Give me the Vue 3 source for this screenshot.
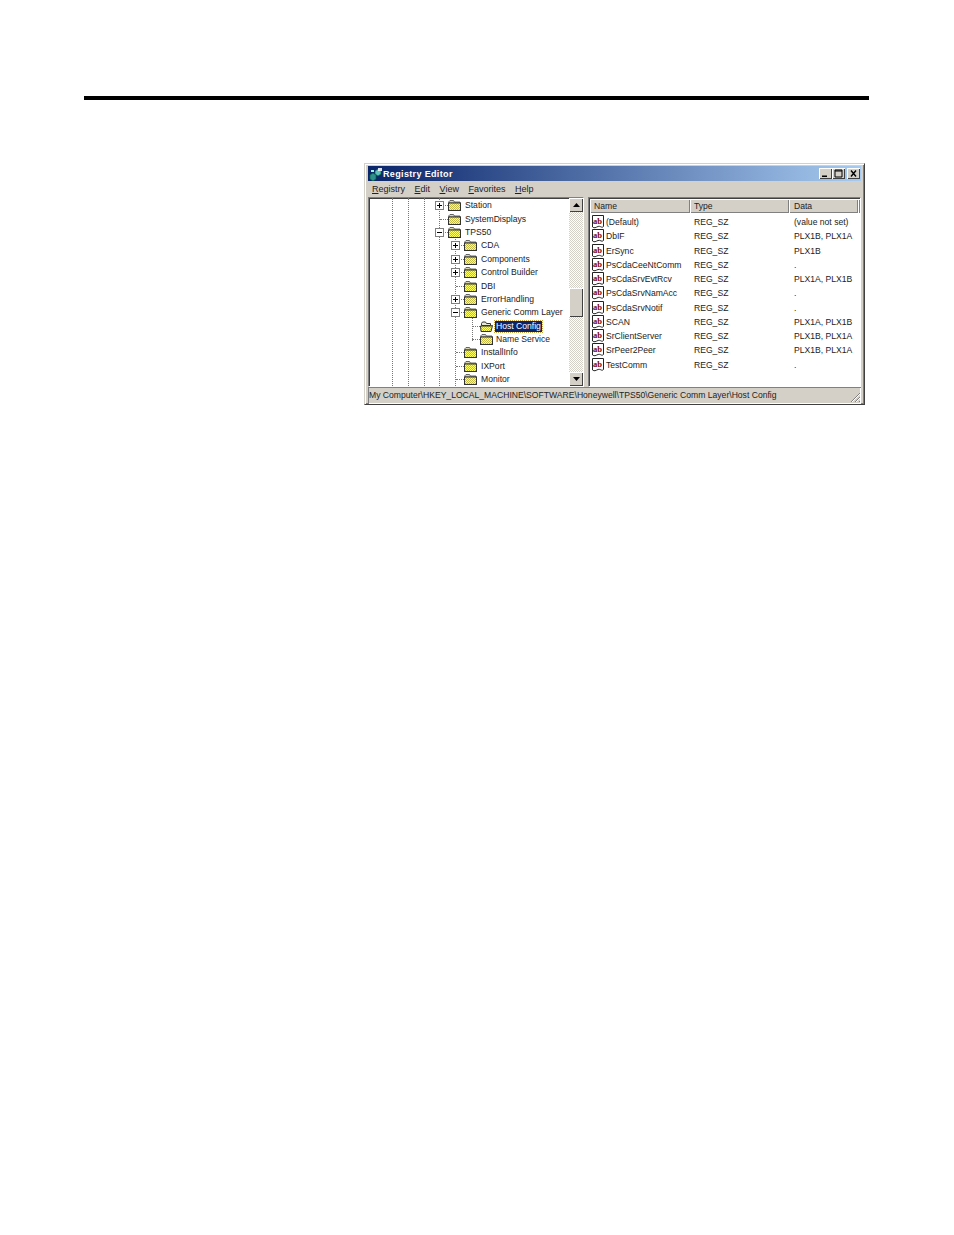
<script setup>
const menus = [
  { key: 'R', rest: 'egistry' },
  { key: 'E', rest: 'dit' },
  { key: 'V', rest: 'iew' },
  { key: 'F', rest: 'avorites' },
  { key: 'H', rest: 'elp' }
]
const tree = [
  { label: 'Station', depth: 0, exp: '+' },
  { label: 'SystemDisplays', depth: 0 },
  { label: 'TPS50', depth: 0, exp: '-' },
  { label: 'CDA', depth: 1, exp: '+' },
  { label: 'Components', depth: 1, exp: '+' },
  { label: 'Control Builder', depth: 1, exp: '+' },
  { label: 'DBI', depth: 1 },
  { label: 'ErrorHandling', depth: 1, exp: '+' },
  { label: 'Generic Comm Layer', depth: 1, exp: '-' },
  { label: 'Host Config', depth: 2, selected: true },
  { label: 'Name Service', depth: 2 },
  { label: 'InstallInfo', depth: 1 },
  { label: 'IXPort', depth: 1 },
  { label: 'Monitor', depth: 1 }
]
const values = [
  ['(Default)', '(value not set)'],
  ['DbIF', 'PLX1B, PLX1A'],
  ['ErSync', 'PLX1B'],
  ['PsCdaCeeNtComm', '.'],
  ['PsCdaSrvEvtRcv', 'PLX1A, PLX1B'],
  ['PsCdaSrvNamAcc', '.'],
  ['PsCdaSrvNotif', '.'],
  ['SCAN', 'PLX1A, PLX1B'],
  ['SrClientServer', 'PLX1B, PLX1A'],
  ['SrPeer2Peer', 'PLX1B, PLX1A'],
  ['TestComm', '.']
]
</script>

<template>
  <div class="page">
    <div class="rule"></div>
    <div class="window">
      <div class="titlebar">
        <svg class="appicon" width="14" height="14" viewBox="0 0 14 14">
          <path d="M1 8l3-2 3 2v4l-3 2-3-2z" fill="#2f8f8f" stroke="#063" stroke-width=".7" />
          <path d="M6 4l3-2 3 2v3l-3 2-3-2z" fill="#5fc0c0" stroke="#063" stroke-width=".7" />
          <path d="M9 1h4v3h-4z" fill="#fff" opacity=".85" />
          <path d="M2 3h3v2H2z" fill="#9fd" />
        </svg>
        <span class="title">Registry Editor</span>
        <div class="captions">
          <span class="cap"><svg width="13" height="11" viewBox="0 0 13 11"><path d="M3 7.500h5v1.500H3z" fill="#000" /></svg></span>
          <span class="cap"><svg width="13" height="11" viewBox="0 0 13 11"><path d="M3 2h7v7H3zM3 3h7" fill="none" stroke="#000" /></svg></span>
          <span class="cap close"><svg width="13" height="11" viewBox="0 0 13 11"><path d="M4 2.500l5 6M9 2.500l-5 6" stroke="#000" stroke-width="1.400" /></svg></span>
        </div>
      </div>

      <div class="menubar">
        <span v-for="m in menus" :key="m.key" class="menu"><u>{{ m.key }}</u>{{ m.rest }}</span>
      </div>

      <div class="panes">
        <div class="tree-pane">
          <div class="tree">
            <i class="guide g1"></i>
            <i class="guide g2"></i>
            <i class="guide g3"></i>
            <i class="guide g4"></i>
            <i class="guide g5"></i>
            <i class="guide g6"></i>
            <div
              v-for="n in tree"
              :key="n.label"
              class="node"
              :style="{ paddingLeft: 66 + n.depth * 16 + 'px' }"
            >
              <span class="stub">
                <span v-if="n.exp" class="exp">
                  <svg width="9" height="9" viewBox="0 0 9 9">
                    <rect x=".5" y=".5" width="8" height="8" fill="#fff" stroke="#808080" />
                    <path d="M2 4.500h5" stroke="#000" />
                    <path v-if="n.exp === '+'" d="M4.500 2v5" stroke="#000" />
                  </svg>
                </span>
              </span>
              <svg class="folder" width="13" height="11" viewBox="0 0 13 11">
                <defs>
                  <pattern id="dith" width="2" height="2" patternUnits="userSpaceOnUse">
                    <rect width="2" height="2" fill="#ffff60" />
                    <rect width="1" height="1" fill="#c4bc48" />
                    <rect x="1" y="1" width="1" height="1" fill="#c4bc48" />
                  </pattern>
                </defs>
                <template v-if="!n.selected">
                  <path d="M1 3V1.500l1-1h3.500l1 1.500H12v1z" fill="#d8d4b8" stroke="#444" stroke-width=".8" />
                  <rect x=".5" y="3" width="12" height="7.500" fill="url(#dith)" stroke="#333" />
                </template>
                <template v-else>
                  <path d="M1.500 2.500l1-1.500h3l1 1.500h4v2h-9z" fill="#e8e8d8" stroke="#333" />
                  <path d="M.5 5h9.500l2.500-.5-1.500 6h-10z" fill="url(#dith)" stroke="#333" />
                </template>
              </svg>
              <span class="node-label" :class="{ sel: n.selected, deep: n.depth === 2 }">{{ n.label }}</span>
            </div>
          </div>
          <div class="vscroll">
            <span class="sbtn"><svg width="7" height="4" viewBox="0 0 7 4"><path d="M3.500 0L7 4H0z" fill="#000" /></svg></span>
            <div class="track">
              <div class="thumb"></div>
            </div>
            <span class="sbtn"><svg width="7" height="4" viewBox="0 0 7 4"><path d="M0 0h7L3.500 4z" fill="#000" /></svg></span>
          </div>
        </div>

        <div class="list-pane">
          <div class="list-head">
            <span class="col c-name">Name</span>
            <span class="col c-type">Type</span>
            <span class="col c-data">Data</span>
            <span class="col c-rest"></span>
          </div>
          <div class="list-body">
            <div v-for="v in values" :key="v[0]" class="row">
              <span class="c-name cell">
                <svg class="ab" width="14" height="14" viewBox="0 0 14 14">
                  <path d="M1.500 .5h11v11c-2 2-3-1-5.500 0s-3.500 2-5.500 .5z" fill="#fff" stroke="#222" />
                  <text x="2" y="8.500" class="abtext">ab</text>
                </svg>
                <span>{{ v[0] }}</span>
              </span>
              <span class="c-type cell typecell">REG_SZ</span>
              <span class="c-data cell datacell">{{ v[1] }}</span>
            </div>
          </div>
        </div>
      </div>

      <div class="statusbar">
        <span class="path">My Computer\HKEY_LOCAL_MACHINE\SOFTWARE\Honeywell\TPS50\Generic Comm Layer\Host Config</span>
        <svg class="grip" width="12" height="12" viewBox="0 0 12 12">
          <path d="M11 2L2 11M11 6l-5 5M11 10l-1 1" stroke="#808080" fill="none" />
          <path d="M11 3l-8 8M11 7l-4 4" stroke="#fff" fill="none" />
        </svg>
      </div>
    </div>
  </div>
</template>

<style scoped>
.page {
  width: 954px;
  height: 1235px;
  background: #fff;
  padding-top: 96px;
  box-sizing: border-box;
  font-family: "Liberation Sans", Arial, sans-serif;
  font-size: 8.6px;
  color: #222;
  overflow: hidden;
}
.rule {
  width: 785px;
  height: 4px;
  margin-left: 84px;
  background: #000;
}
.window {
  width: 501px;
  height: 242px;
  margin: 63px 0 0 364px;
  box-sizing: border-box;
  padding: 2px 3px 1px;
  background: #d4d0c8;
  border: 1px solid;
  border-color: #d4d0c8 #404040 #404040 #d4d0c8;
  box-shadow: inset 1px 1px 0 #fff, inset -1px -1px 0 #808080;
  display: flex;
  flex-direction: column;
}
.titlebar {
  height: 15px;
  flex: none;
  display: flex;
  align-items: center;
  padding-left: 1px;
  background: linear-gradient(90deg, #0a246a, #a6caf0);
}
.title {
  color: #fff;
  font-weight: 700;
  font-size: 9px;
  letter-spacing: 0.35px;
}
.captions {
  margin-left: auto;
  display: flex;
  padding-right: 1px;
}
.cap {
  width: 13px;
  height: 11px;
  display: flex;
  align-items: center;
  justify-content: center;
  overflow: hidden;
  background: #d4d0c8;
  box-shadow: inset 1px 1px 0 #fff, inset -1px -1px 0 #404040;
}
.close {
  margin-left: 2px;
}
.menubar {
  height: 16px;
  flex: none;
  display: flex;
  align-items: center;
  gap: 9.5px;
  padding-left: 4px;
  font-size: 9px;
}
.menu u {
  text-decoration: underline;
}
.panes {
  height: 190px;
  flex: none;
  display: flex;
  gap: 4px;
}
.tree-pane {
  width: 216px;
  flex: none;
  box-sizing: border-box;
  display: flex;
  background: #fff;
  border: 1px solid;
  border-color: #808080 #fff #fff #808080;
  box-shadow: inset 1px 1px 0 #404040;
}
.tree {
  position: relative;
  flex: 1;
  overflow: hidden;
  padding-top: 1px;
}
.guide {
  position: absolute;
  width: 0;
  border-left: 1px dotted #777;
}
.g1 { left: 23px; top: 0; bottom: 0; }
.g2 { left: 39px; top: 0; bottom: 0; }
.g3 { left: 55px; top: 0; bottom: 0; }
.g4 { left: 70px; top: 0; bottom: 0; }
.g5 { left: 86px; top: 34px; bottom: 0; }
.g6 { left: 103px; top: 116px; height: 27px; }
.node {
  position: relative;
  height: 13.4px;
  display: flex;
  align-items: center;
}
.stub {
  position: relative;
  width: 13px;
  height: 9px;
  flex: none;
  box-sizing: border-box;
}
.stub::before {
  content: "";
  position: absolute;
  left: 5px;
  right: 0;
  top: 4px;
  border-top: 1px dotted #777;
}
.exp {
  position: absolute;
  left: 0;
  top: 0;
  display: flex;
}
.folder {
  flex: none;
}
.node-label {
  margin-left: 3px;
  padding: 0 1px;
  line-height: 11px;
  white-space: nowrap;
}
.deep {
  margin-left: 2px;
}
.sel {
  background: #0a246a;
  color: #fff;
  outline: 1px dotted #c8a040;
}
.vscroll {
  width: 14px;
  flex: none;
  display: flex;
  flex-direction: column;
}
.sbtn {
  height: 14px;
  flex: none;
  display: flex;
  align-items: center;
  justify-content: center;
  background: #d4d0c8;
  box-shadow: inset 1px 1px 0 #fff, inset -1px -1px 0 #404040;
}
.track {
  flex: 1;
  background: repeating-conic-gradient(#d4d0c8 0 25%, #fff 0 50%) 0 0 / 2px 2px;
}
.thumb {
  height: 29px;
  margin-top: 76px;
  background: #d4d0c8;
  box-shadow: inset 1px 1px 0 #fff, inset -1px -1px 0 #404040;
}
.list-pane {
  flex: 1;
  min-width: 0;
  background: #fff;
  border: 1px solid;
  border-color: #808080 #fff #fff #808080;
  box-shadow: inset 1px 1px 0 #404040;
  box-sizing: border-box;
  padding: 1px 0 0 1px;
}
.list-head {
  height: 14px;
  display: flex;
  background: #d4d0c8;
}
.col {
  box-sizing: border-box;
  line-height: 14px;
  padding-left: 4px;
  box-shadow: inset 1px 1px 0 #fff, inset -1px -1px 0 #808080;
}
.c-name { width: 100px; flex: none; }
.c-type { width: 99px; flex: none; }
.c-data { width: 69px; flex: none; padding-left: 5px; }
.c-rest { flex: 1; padding: 0; }
.list-body {
  padding-top: 2px;
}
.row {
  height: 14.25px;
  display: flex;
  align-items: center;
}
.cell {
  box-sizing: border-box;
  white-space: nowrap;
  display: flex;
  align-items: center;
}
.ab {
  margin: 0 1px 0 1px;
  flex: none;
}
.abtext {
  font-family: "Liberation Serif", serif;
  font-size: 8.5px;
  font-weight: 700;
  fill: #800000;
}
.typecell {
  padding-left: 4px;
}
.datacell {
  padding-left: 5px;
}
.statusbar {
  height: 17px;
  flex: none;
  box-sizing: border-box;
  padding: 0 0 1px 1px;
  display: flex;
  align-items: center;
  box-shadow: inset 1px 1px 0 #808080, inset -1px -1px 0 #fff;
}
.path {
  white-space: nowrap;
}
.grip {
  margin-left: auto;
  align-self: flex-end;
}
</style>
